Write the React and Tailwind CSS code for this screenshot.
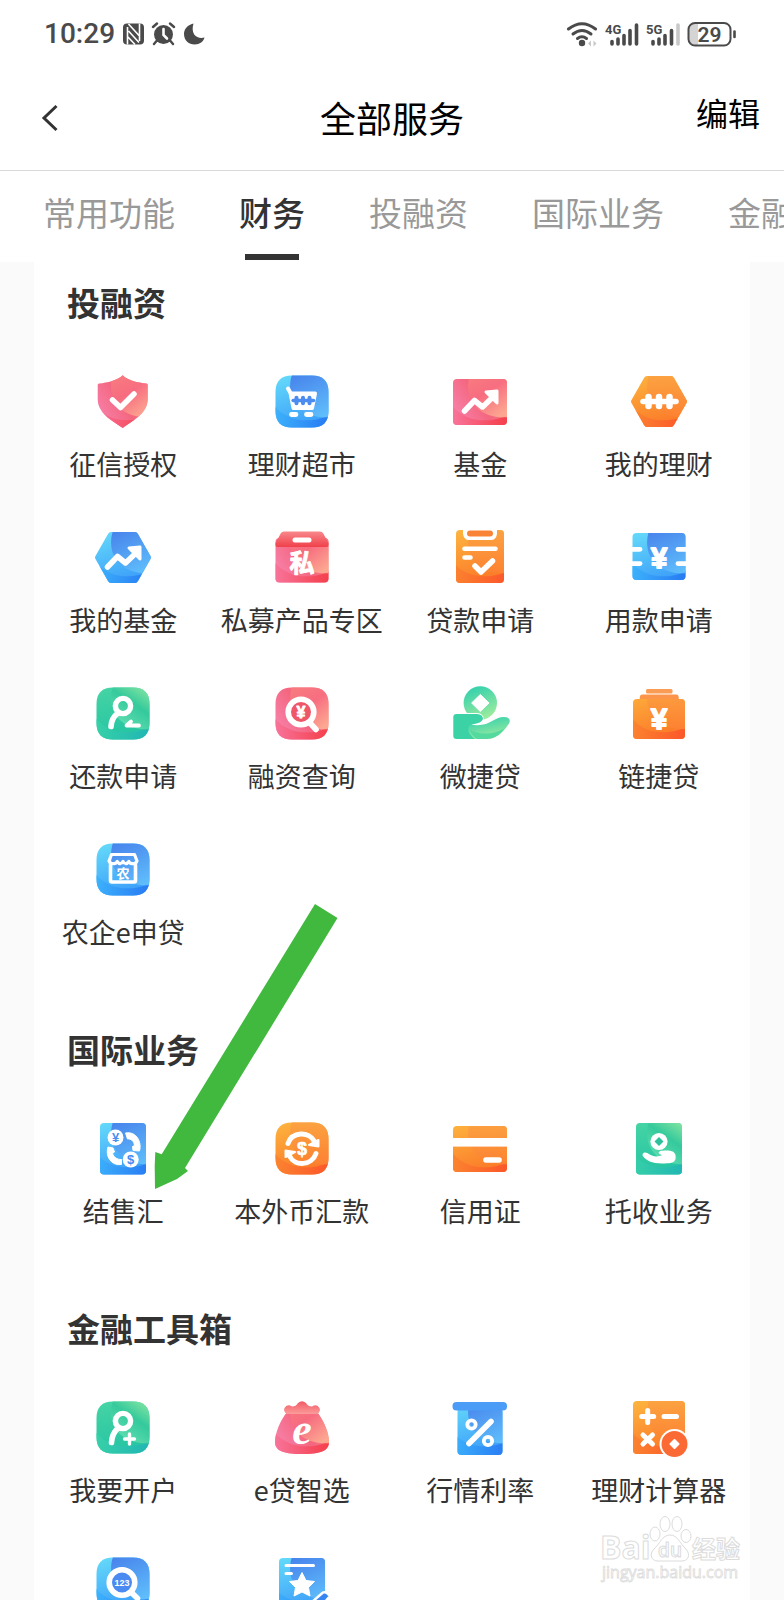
import { useState } from "react";

const SQUARE =
  "M22 5.5 H42 C53 5.5 58.5 11 58.5 22 V41 C58.5 52 53 57.5 42 57.5 H22 C11 57.5 5.5 52 5.5 41 V22 C5.5 11 11 5.5 22 5.5Z";
const HEXAGON =
  "M20 6 H44 Q46 6 47 8 L59.5 30 Q60.5 31.5 59.5 33 L47 55 Q46 57 44 57 H20 Q18 57 17 55 L4.5 33 Q3.5 31.5 4.5 30 L17 8 Q18 6 20 6Z";

function Gradients() {
  return (
    <svg className="absolute h-0 w-0" aria-hidden="true">
      <defs>
        <linearGradient id="pink" x1="0" y1="0.8" x2="1" y2="0.2">
          <stop offset="0" stopColor="#f88ab8" />
          <stop offset="0.5" stopColor="#f4667f" />
          <stop offset="1" stopColor="#fb8f86" />
        </linearGradient>
        <linearGradient id="pinkGlow" x1="0.1" y1="0" x2="0.7" y2="1">
          <stop offset="0" stopColor="#f8807f" />
          <stop offset="0.5" stopColor="#f76c80" />
          <stop offset="1" stopColor="#fdac92" />
        </linearGradient>
        <linearGradient id="pinkLow" x1="0" y1="0" x2="1" y2="0">
          <stop offset="0" stopColor="#f87399" />
          <stop offset="1" stopColor="#f5343e" />
        </linearGradient>
        <linearGradient id="blue" x1="0" y1="0" x2="0.3" y2="1">
          <stop offset="0" stopColor="#6be3fa" />
          <stop offset="1" stopColor="#3a9bf9" />
        </linearGradient>
        <linearGradient id="blueGlow" x1="0.3" y1="0" x2="0.7" y2="1">
          <stop offset="0" stopColor="#4479ea" />
          <stop offset="1" stopColor="#62c0fb" />
        </linearGradient>
        <linearGradient id="blueLow" x1="0" y1="0" x2="1" y2="0">
          <stop offset="0" stopColor="#3bb4fc" />
          <stop offset="1" stopColor="#2470f1" />
        </linearGradient>
        <linearGradient id="orange" x1="0.2" y1="0" x2="0.5" y2="1">
          <stop offset="0" stopColor="#fdb840" />
          <stop offset="1" stopColor="#fb7226" />
        </linearGradient>
        <linearGradient id="orangeGlow" x1="0.5" y1="0" x2="0.5" y2="1">
          <stop offset="0" stopColor="#fba544" />
          <stop offset="1" stopColor="#fd8232" />
        </linearGradient>
        <linearGradient id="orangeLow" x1="0" y1="0" x2="1" y2="0">
          <stop offset="0" stopColor="#fb8430" />
          <stop offset="1" stopColor="#fc4e2a" />
        </linearGradient>
        <linearGradient id="green" x1="0" y1="0" x2="0.2" y2="1">
          <stop offset="0" stopColor="#4ad6a4" />
          <stop offset="1" stopColor="#22c3a3" />
        </linearGradient>
        <linearGradient id="greenGlow" x1="0.9" y1="0" x2="0.3" y2="1">
          <stop offset="0" stopColor="#a6f0a4" />
          <stop offset="0.5" stopColor="#34c99b" />
          <stop offset="1" stopColor="#6ae2b4" />
        </linearGradient>
        <linearGradient id="greenLow" x1="0" y1="0" x2="1" y2="0">
          <stop offset="0" stopColor="#3ad3a8" />
          <stop offset="1" stopColor="#1eb1b8" />
        </linearGradient>
        <linearGradient id="mint" x1="0.2" y1="0" x2="0.6" y2="1">
          <stop offset="0" stopColor="#2fcfae" />
          <stop offset="1" stopColor="#9eec9d" />
        </linearGradient>
        <linearGradient id="lid" x1="0" y1="0" x2="0" y2="1">
          <stop offset="0" stopColor="#f8888c" />
          <stop offset="1" stopColor="#f0404a" />
        </linearGradient>
        <linearGradient id="neck" x1="0" y1="0" x2="0" y2="1">
          <stop offset="0" stopColor="#f25a66" />
          <stop offset="1" stopColor="#fb9c9a" />
        </linearGradient>
      </defs>
    </svg>
  );
}

// Coloured plate with two soft curved bands
function Plate({ id, d, tone }) {
  const fills = {
    pink: ["url(#pink)", "url(#pinkGlow)", "url(#pinkLow)"],
    blue: ["url(#blue)", "url(#blueGlow)", "url(#blueLow)"],
    orange: ["url(#orange)", "url(#orangeGlow)", "url(#orangeLow)"],
    green: ["url(#green)", "url(#greenGlow)", "url(#greenLow)"],
  }[tone];
  return (
    <>
      <clipPath id={`clip-${id}`}>
        <path d={d} />
      </clipPath>
      <g clipPath={`url(#clip-${id})`}>
        <rect width="64" height="64" fill={fills[0]} />
        <path d="M3 34 C14 50 38 56 62 44 V64 H3Z" fill={fills[2]} opacity="0.85" />
        <path d="M24 0 C14 20 22 50 62 47 V0Z" fill={fills[1]} opacity="0.9" />
      </g>
    </>
  );
}

function roundRect(x, y, w, h, r = 4) {
  return `M${x + r} ${y} H${x + w - r} Q${x + w} ${y} ${x + w} ${y + r} V${y + h - r} Q${x + w} ${y + h} ${x + w - r} ${y + h} H${x + r} Q${x} ${y + h} ${x} ${y + h - r} V${y + r} Q${x} ${y} ${x + r} ${y}Z`;
}

function Line({ d, w = 5, color = "#fff" }) {
  return (
    <path d={d} fill="none" stroke={color} strokeWidth={w} strokeLinecap="round" strokeLinejoin="round" />
  );
}

function Sign({ x = 32, y, size, color = "#fff", stroke = 0, children }) {
  return (
    <text
      x={x}
      y={y}
      fontSize={size}
      fontWeight="700"
      textAnchor="middle"
      fill={color}
      stroke={color}
      strokeWidth={stroke}
      strokeLinejoin="round"
      className="font-['Liberation_Sans','Noto_Sans_CJK_SC',sans-serif]"
    >
      {children}
    </text>
  );
}

function Growth() {
  return (
    <>
      <Line d="M16.5 41 L26.5 30.5 L34.5 37 L45 27" w={5.5} />
      <path d="M38 22 L49 21 L49 33Z" fill="#fff" stroke="#fff" strokeWidth="3" strokeLinejoin="round" />
    </>
  );
}

function Beads({ color, x, y, s }) {
  return (
    <g transform={`translate(${x} ${y}) scale(${s})`}>
      <Line d="M-16 0 H17" w={5.5} color={color} />
      <Line d="M-10.5 -4.5 V4.5 M0 -4.5 V4.5 M10.5 -4.5 V4.5" w={6.5} color={color} />
    </g>
  );
}

const icons = {
  shield: (
    <>
      <Plate
        id="shield"
        tone="pink"
        d="M31.7 5.3 C27 10 16 13 8 13.5 Q6.7 13.8 6.7 15 V29 C6.7 43 20 50 31.7 58 C43 50 56.7 43 56.7 29 V15 Q56.7 13.8 55.4 13.5 C47 13 36 10 31.7 5.3Z"
      />
      <Line d="M21.5 30 L29.5 37.5 L43 24" w={5.5} />
    </>
  ),
  cart: (
    <>
      <Plate id="cart" tone="blue" d={SQUARE} />
      <path d="M18 18.5 L20.5 23 L23.5 38 H42 L45 23.5 H21" fill="#fff" stroke="#fff" strokeWidth="4" strokeLinejoin="round" strokeLinecap="round" />
      <Beads color="#4c8cf0" x={33} y={30.5} s={0.62} />
      <Line d="M21.5 44.5 H26 M36.5 44.5 H41" w={4.8} />
    </>
  ),
  fund: (
    <>
      <Plate id="fund" tone="pink" d={roundRect(5, 9, 54, 46)} />
      <Growth />
    </>
  ),
  wealth: (
    <>
      <Plate id="wealth" tone="orange" d={HEXAGON} />
      <Beads color="#fff" x={32} y={31.5} s={1} />
    </>
  ),
  myFund: (
    <>
      <Plate id="myFund" tone="blue" d={HEXAGON} />
      <Growth />
    </>
  ),
  privateBox: (
    <>
      <Plate id="privateBox" tone="pink" d={roundRect(5.5, 12, 53, 44.5)} />
      <path d="M14 5.5 H50 Q52 5.5 53 7 L58.5 17 V19 Q58.5 21 56.5 21 H7.5 Q5.5 21 5.5 19 V17 L11 7 Q12 5.5 14 5.5Z" fill="url(#lid)" />
      <Line d="M25 14 H39" w={5} />
      <Sign y={46} size={25} stroke={0.9}>私</Sign>
    </>
  ),
  clipboard: (
    <>
      <Plate id="clipboard" tone="orange" d={roundRect(8, 4, 48, 53)} />
      <path d="M15 3 H49 V8 Q48 14 43 14 H21 Q16 14 15 8Z" fill="#fff" />
      <Line d="M22 7.5 H42" w={6} color="#f98438" />
      <Line d="M16.5 22.7 H47.5 M16.5 31.5 H22.5" w={4.6} />
      <Line d="M27 40 L33 46 L44.5 35" w={5.5} />
    </>
  ),
  ticket: (
    <>
      <Plate id="ticket" tone="blue" d={roundRect(5.5, 7, 53, 47)} />
      <path d="M5 21 H13 Q15.5 21 15.5 23.3 Q15.5 25.7 13 25.7 H5Z M5 35.3 H13 Q15.5 35.3 15.5 37.6 Q15.5 40 13 40 H5Z M59 21 H51 Q48.5 21 48.5 23.3 Q48.5 25.7 51 25.7 H59Z M59 35.3 H51 Q48.5 35.3 48.5 37.6 Q48.5 40 51 40 H59Z" fill="#fff" />
      <Sign y={41.5} size={29} stroke={1.8}>¥</Sign>
    </>
  ),
  repay: (
    <>
      <Plate id="repay" tone="green" d={SQUARE} />
      <circle cx="32" cy="24" r="7.6" fill="none" stroke="#fff" strokeWidth="5.4" />
      <Line d="M26.5 31.5 Q20.5 36 20 44.5" w={5.6} />
      <Line d="M48 43.5 H35.5 L40 39.5" w={3.8} />
    </>
  ),
  search: (
    <>
      <Plate id="search" tone="pink" d={SQUARE} />
      <Line d="M40 41 L46 47.5" w={5.6} />
      <circle cx="31" cy="30" r="12.8" fill="#ee5768" stroke="#fff" strokeWidth="5.6" />
      <Sign x={31} y={35.5} size={16} stroke={0.8}>¥</Sign>
    </>
  ),
  handCoin: (
    <>
      <circle cx="32.3" cy="21" r="16.7" fill="url(#mint)" />
      <path d="M32.3 12.5 L41 21 L32.3 29.5 L23.6 21Z" fill="#fff" stroke="#fff" strokeLinejoin="round" />
      <path d="M8.5 32 H29 Q35 32.5 34.7 38 Q34 42 26 43 L37 44 C46 42 49 35 57 35 C61 35 63 38 61 41.5 C54 52 48 57 38 57 H8.5 Q5.3 57 5.3 54 V35 Q5.3 32 8.5 32Z" fill="#fff" stroke="#fff" strokeWidth="2" />
      <path d="M8.5 32 H29 Q35 32.5 35 37 Q34 41 24 42.5 Q18 48 28 57 H8.5 Q5.3 57 5.3 54 V35 Q5.3 32 8.5 32Z" fill="#3bd3a6" />
      <path d="M22 42.5 C42 46 45 35 56 35 C61 35 63 38 61 41.5 C54 52 48 57 38 57 H27 Q17 50 22 42.5Z" fill="url(#mint)" />
      <path d="M22 48 C34 54 48 52 57 46 C51 54 45 57 38 57 H29 Q24 54 22 48Z" fill="#54d99f" />
    </>
  ),
  wallet: (
    <>
      <rect x="19" y="7" width="26.5" height="4.5" rx="1.5" fill="#fb9c54" />
      <path d="M15 12.5 H49.5 Q51 12.5 51.5 14 L52 18 H12.5 L13 14 Q13.5 12.5 15 12.5Z" fill="#fc9549" />
      <Plate id="wallet" tone="orange" d={roundRect(6, 17, 52, 40)} />
      <Sign y={47} size={29} stroke={1.8}>¥</Sign>
    </>
  ),
  farm: (
    <>
      <Plate id="farm" tone="blue" d={SQUARE} />
      <Line d="M19.5 27 V42.5 Q19.5 44 21 44 H43 Q44.5 44 44.5 42.5 V27" w={3.6} />
      <Line d="M20.5 16.5 H43.5 L46 23 Q45 26 42 25.5 Q39 26 37.8 23.5 Q36 26 34.5 25.5 Q33 25.5 32 23.5 Q31 25.5 29.5 25.5 Q28 26 26.2 23.5 Q25 26 22 25.5 Q19 26 18 23Z" w={3.2} />
      <Sign y={40} size={13}>农</Sign>
    </>
  ),
  exchange: (
    <>
      <Plate id="exchange" tone="blue" d={roundRect(9, 6, 46, 51.5)} />
      <circle cx="24.5" cy="20.5" r="8" fill="#fff" />
      <Sign x={24.5} y={25} size={13} color="#4a8ef0">¥</Sign>
      <path d="M34.5 16 C46 14 51 26 48.5 34 L42 33.5 L41.5 29.5 L43.5 28.5 C43 24 40 21.5 36.5 22Z" fill="#fff" stroke="#fff" strokeLinejoin="round" />
      <path d="M17 30 L22 31 L23.5 35 L21.5 36.5 C23 40.5 26 42.5 30.5 42.5 V47.5 C20 49 14 39 17 30Z" fill="#fff" stroke="#fff" strokeLinejoin="round" />
      <circle cx="39.7" cy="42.5" r="8" fill="#fff" />
      <Sign x={39.7} y={47.2} size={13} color="#3f8cf2">$</Sign>
    </>
  ),
  remit: (
    <>
      <Plate id="remit" tone="orange" d={SQUARE} />
      <Line d="M18 26.5 C22 14.5 39 14 44.5 24.5" w={5} />
      <path d="M48.5 23 L48.5 29.5 L39 28Z" fill="#fff" stroke="#fff" strokeWidth="2" strokeLinejoin="round" />
      <Line d="M19.5 39 C25 50 42 48.5 46 36.5" w={5} />
      <path d="M15.5 40 L15.5 33.5 L25 35Z" fill="#fff" stroke="#fff" strokeWidth="2" strokeLinejoin="round" />
      <Sign y={38} size={18} stroke={0.6}>$</Sign>
    </>
  ),
  card: (
    <>
      <Plate id="card" tone="orange" d={roundRect(5, 9, 54, 46)} />
      <rect x="4" y="21" width="56" height="8.6" fill="#fff" />
      <Line d="M38 43 H51" w={5.6} />
    </>
  ),
  collect: (
    <>
      <Plate id="collect" tone="green" d={roundRect(9, 6, 46, 51.5)} />
      <circle cx="32" cy="24.5" r="8.6" fill="#fff" />
      <path d="M32 20 L36.5 24.5 L32 29 L27.5 24.5Z" fill="#2cc09c" />
      <path d="M16.5 36 C20 34 23 39.5 29.5 39.5 L35 38.5 L31.5 36 C32 33.5 36 33.5 41 33.5 C47 33.5 49.5 37 48.5 42 C47.5 46 43 46.5 35 46.5 C25 46.5 19 43.5 15.7 39 Q15 37 16.5 36Z" fill="#fff" />
    </>
  ),
  openAccount: (
    <>
      <Plate id="openAccount" tone="green" d={SQUARE} />
      <circle cx="32" cy="25" r="7.6" fill="none" stroke="#fff" strokeWidth="5.4" />
      <Line d="M26.5 32.5 Q21 38 20.5 46.5" w={5.6} />
      <Line d="M38.5 38 V48 M33.5 43 H43.5" w={3.4} />
    </>
  ),
  bag: (
    <>
      <Plate
        id="bag"
        tone="pink"
        d="M17 16 H47 C54 25 59 37 59 46 C59 56 48 58 32 58 C16 58 5 56 5 46 C5 37 10 25 17 16Z"
      />
      <path d="M14.5 12 Q17 7.5 22 10.5 Q26 10.5 28 7 Q32 3.5 36 7 Q38 10.5 42 10.5 Q47 7.5 49.5 12 Q51 15 47.5 18 H16.5 Q13 15 14.5 12Z" fill="url(#neck)" />
      <text x="32" y="48" fontSize="44" fontWeight="700" fontStyle="italic" textAnchor="middle" fill="#fff" className="font-['Liberation_Serif',serif]">
        e
      </text>
    </>
  ),
  rate: (
    <>
      <Plate id="rate" tone="blue" d={roundRect(9.5, 12, 45, 47)} />
      <rect x="4.5" y="6" width="54.5" height="8.5" rx="4" fill="#4a9cf7" />
      <circle cx="23.5" cy="28.5" r="4.2" fill="none" stroke="#fff" strokeWidth="3.8" />
      <circle cx="40" cy="45" r="4.2" fill="none" stroke="#fff" strokeWidth="3.8" />
      <Line d="M43 25.5 L21 47.5" w={5.6} />
    </>
  ),
  calculator: (
    <>
      <Plate id="calculator" tone="orange" d={roundRect(6, 5, 52, 53)} />
      <Line d="M20.7 14.5 V26.5 M14.7 20.5 H26.7 M37 20.5 H49.5 M16 39 L25.5 48 M25.5 39 L16 48" w={5} />
      <circle cx="47.5" cy="48" r="15" fill="#fff" />
      <circle cx="47.5" cy="48" r="13" fill="#fb6a35" />
      <path d="M47.5 44 L51.5 48 L47.5 52 L43.5 48Z" fill="#fff" stroke="#fff" strokeWidth="2" strokeLinejoin="round" />
    </>
  ),
  lookup: (
    <>
      <Plate id="lookup" tone="blue" d={SQUARE} />
      <Line d="M40 40 L46.5 46.5" w={5.6} />
      <circle cx="31" cy="30.5" r="12.8" fill="#4b8af0" stroke="#fff" strokeWidth="5.6" />
      <Sign x={31} y={34} size={9}>123</Sign>
    </>
  ),
  starDoc: (
    <>
      <Plate id="starDoc" tone="blue" d={roundRect(9, 6, 46, 53)} />
      <Line d="M16 13.5 H43.5 M16 21.5 H21.5" w={3} />
      <path d="M32 20.5 L36 28.5 L44.5 29.5 L38.5 35.5 L40 44 L32 40 L24 44 L25.5 35.5 L19.5 29.5 L28 28.5Z" fill="#fff" stroke="#fff" strokeLinejoin="round" />
      <path d="M42 50 L53 40.5 Q56 39 60 44 L48 58 H38Z" fill="#3685f2" stroke="#fff" strokeWidth="2.5" strokeLinejoin="round" />
    </>
  ),
};

const sections = [
  {
    title: "投融资",
    items: [
      { icon: "shield", label: "征信授权" },
      { icon: "cart", label: "理财超市" },
      { icon: "fund", label: "基金" },
      { icon: "wealth", label: "我的理财" },
      { icon: "myFund", label: "我的基金" },
      { icon: "privateBox", label: "私募产品专区" },
      { icon: "clipboard", label: "贷款申请" },
      { icon: "ticket", label: "用款申请" },
      { icon: "repay", label: "还款申请" },
      { icon: "search", label: "融资查询" },
      { icon: "handCoin", label: "微捷贷" },
      { icon: "wallet", label: "链捷贷" },
      { icon: "farm", label: "农企e申贷" },
    ],
  },
  {
    title: "国际业务",
    items: [
      { icon: "exchange", label: "结售汇" },
      { icon: "remit", label: "本外币汇款" },
      { icon: "card", label: "信用证" },
      { icon: "collect", label: "托收业务" },
    ],
  },
  {
    title: "金融工具箱",
    items: [
      { icon: "openAccount", label: "我要开户" },
      { icon: "bag", label: "e贷智选" },
      { icon: "rate", label: "行情利率" },
      { icon: "calculator", label: "理财计算器" },
      { icon: "lookup", label: "" },
      { icon: "starDoc", label: "" },
    ],
  },
];

const tabs = ["常用功能", "财务", "投融资", "国际业务", "金融工具箱"];

function StatusBar() {
  return (
    <div className="flex h-16 items-center justify-between pr-12 pl-11 pt-[3px] text-[#4a4a4a]">
      <div className="flex items-center gap-2">
        <span className="font-['Roboto',sans-serif] text-[28px] leading-8 font-medium">10:29</span>
        <svg className="h-6 w-[82px]" viewBox="0 0 82 24" fill="#4a4a4a">
          <path d="M4 1.5 H17 Q21 1.5 21 5.5 V18.5 Q21 22.5 17 22.5 H4 Q0 22.5 0 18.5 V5.5 Q0 1.5 4 1.5Z" />
          <path d="M4.5 22.5 V5 M16.5 1.5 V19 M5.5 2 L16 13.5 M5.5 9 L16 20.5 M5 15 L12 22.5" stroke="#fff" strokeWidth="1.6" fill="none" />
          <circle cx="40.5" cy="12.5" r="9.5" />
          <path d="M30 5 L34 1.5 M51 5 L47 1.5 M33.5 19 L31 22 M47.5 19 L50 22" stroke="#4a4a4a" strokeWidth="2.4" strokeLinecap="round" />
          <path d="M40.5 7 V13 L44 16.5" stroke="#fff" strokeWidth="2.6" strokeLinecap="round" fill="none" />
          <path d="M70.5 1.5 C64 3 61 7.5 61 12 C61 18.5 66 22.5 71.5 22.5 C77 22.5 80.5 19.5 81.5 15.5 C75 17.5 67 13 70.5 1.5Z" />
        </svg>
      </div>
      <svg className="h-7 w-[170px] font-['Roboto',sans-serif]" viewBox="0 0 170 28">
        <g fill="none" stroke="#4a4a4a" strokeWidth="3" strokeLinecap="round">
          <path d="M2.5 9 Q16 -1.5 29.5 9" />
          <path d="M7 14 Q16 7 25 14" />
          <path d="M11.5 18.5 Q16 15 20.5 18.5" />
        </g>
        <circle cx="16" cy="23" r="3.2" fill="#4a4a4a" />
        <path d="M25 20.5 V26.5 L22 23.5Z M27.5 20.5 V26.5 L30.5 23.5Z" fill="#c8c8c8" />
        <text x="39" y="14" fontSize="13" fontWeight="700" fill="#4a4a4a">4G</text>
        <g stroke="#4a4a4a" strokeWidth="3.6" strokeLinecap="round">
          <path d="M46 21.5 V24 M52 19 V24 M58 15.5 V24 M64 10.5 V24 M70.5 5 V24" />
          <path d="M87 21.5 V24 M93 19 V24 M99 15.5 V24 M105.5 10.5 V24" />
          <path d="M112 5 V24" stroke="#c8c8c8" />
        </g>
        <text x="80" y="14" fontSize="13" fontWeight="700" fill="#4a4a4a">5G</text>
        <path d="M130 3 H132 V25 H130 Q123 25 123 18 V10 Q123 3 130 3Z" fill="#d4d4d4" />
        <rect x="122.5" y="3" width="42" height="22.5" rx="6.5" fill="none" stroke="#4a4a4a" strokeWidth="2" />
        <path d="M168.500 11.5 V17" stroke="#4a4a4a" strokeWidth="2.6" strokeLinecap="round" />
        <text x="143.5" y="21.5" fontSize="21" fontWeight="600" textAnchor="middle" fill="#4a4a4a">29</text>
      </svg>
    </div>
  );
}

function ServiceItem({ icon, label }) {
  return (
    <button type="button" className="flex flex-col items-center">
      <svg className="h-16 w-16" viewBox="0 0 64 64" aria-hidden="true">
        {icons[icon]}
      </svg>
      <span className="mt-3 h-9 text-[27px] leading-9 whitespace-nowrap">{label}</span>
    </button>
  );
}

function Watermark() {
  return (
    <svg
      className="pointer-events-none absolute right-10 bottom-3.5 h-[76px] w-[146px] font-['Open_Sans','Noto_Sans_CJK_SC',sans-serif]"
      viewBox="0 0 146 76"
      fill="#fff"
      stroke="#dcdcdc"
    >
      <text x="2" y="49" fontSize="32" fontWeight="700">Bai</text>
      <ellipse cx="57" cy="24" rx="5" ry="7" />
      <ellipse cx="67" cy="14" rx="5" ry="7.5" />
      <ellipse cx="79" cy="14" rx="5" ry="7.5" />
      <ellipse cx="88" cy="26" rx="5" ry="6.5" />
      <path d="M72 25 C80 25 82 34 88 39 C93 45 90 51 84 51 H60 C53 51 51 44 56 39 C62 34 64 25 72 25Z" />
      <text x="72" y="47" fontSize="19" fontWeight="600" textAnchor="middle">du</text>
      <text x="94" y="48" fontSize="24" fontWeight="700">经验</text>
      <text x="4" y="68" fontSize="16" fontWeight="500" strokeWidth="0.8">jingyan.baidu.com</text>
    </svg>
  );
}

export default function App() {
  const [activeTab, setActiveTab] = useState("财务");

  return (
    <div className="relative flex h-screen flex-col overflow-hidden bg-[#fafafa] font-['Noto_Sans_CJK_SC',sans-serif] text-[#333]">
      <Gradients />
      <header className="shrink-0 bg-white">
        <StatusBar />
        <div className="grid h-[107px] grid-cols-3 items-center border-b border-[#d9d9d9] pr-6 pl-10">
          <button type="button" aria-label="返回" className="justify-self-start">
            <svg className="h-8 w-5" viewBox="0 0 20 32" fill="none" stroke="#333" strokeWidth="3">
              <path d="M16.5 5 L4 17 L16.5 29" />
            </svg>
          </button>
          <h1 className="-ml-4 text-center text-4xl leading-[48px] text-black">全部服务</h1>
          <button type="button" className="mb-2.5 justify-self-end text-[32px] leading-10 text-black">
            编辑
          </button>
        </div>
        <nav className="flex h-[91px] gap-16 overflow-hidden pl-[43px]">
          {tabs.map((tab) => (
            <button
              key={tab}
              type="button"
              onClick={() => setActiveTab(tab)}
              className={`flex shrink-0 flex-col items-center pt-[17px] text-[33px] leading-[48px] whitespace-nowrap ${
                tab === activeTab ? "font-medium text-[#333]" : "text-[#999]"
              }`}
            >
              {tab}
              {tab === activeTab && <span className="mt-[18px] h-1.5 w-[54px] bg-[#333]" />}
            </button>
          ))}
        </nav>
      </header>

      <main className="mx-[34px] flex grow flex-col gap-[75px] bg-white pt-4">
        {sections.map((section) => (
          <section key={section.title}>
            <h2 className="mb-11 pl-[33px] text-[33px] leading-[48px] font-bold">{section.title}</h2>
            <div className="grid grid-cols-4 gap-y-11 pr-0.5">
              {section.items.map((item) => (
                <ServiceItem key={item.icon} icon={item.icon} label={item.label} />
              ))}
            </div>
          </section>
        ))}
      </main>

      {/* pointer towards 结售汇 */}
      <svg className="pointer-events-none absolute top-[903px] left-[154px] h-[288px] w-[186px]" viewBox="0 0 186 288">
        <path d="M161 1 L183.5 15 L31 265 L34 268 L23 276 L1 286 L0.7 263 L1.3 249 L7.7 251.3Z" fill="#41b93f" />
      </svg>
      <Watermark />
    </div>
  );
}
